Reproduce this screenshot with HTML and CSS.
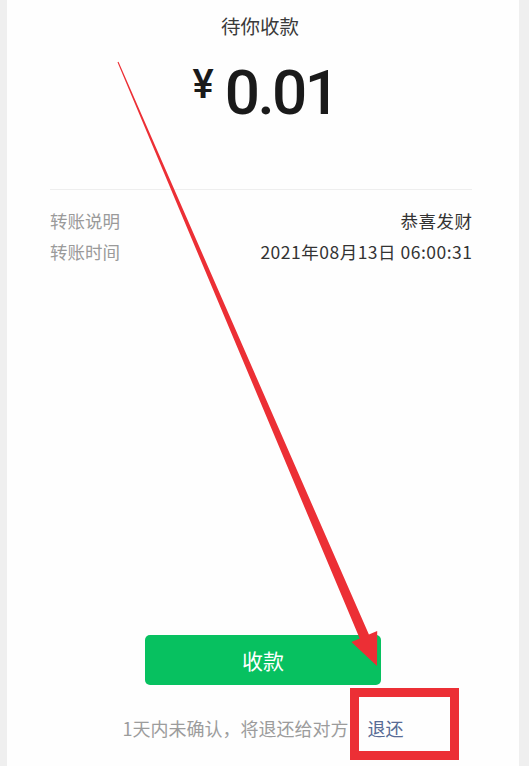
FILE: index.html
```html
<!DOCTYPE html>
<html lang="zh-CN">
<head>
<meta charset="utf-8">
<title>待你收款</title>
<link rel="stylesheet" href="styles.css">
</head>
<body>
<div class="panel">
  <h1 class="title">待你收款</h1>
  <div class="amount"><span class="yen">¥</span><span class="num">0.01</span></div>
  <div class="details">
    <div class="row"><span class="label">转账说明</span><span class="value">恭喜发财</span></div>
    <div class="row"><span class="label">转账时间</span><span class="value">2021年08月13日 06:00:31</span></div>
  </div>
  <div class="spacer"></div>
  <button class="btn">收款</button>
  <p class="note">1天内未确认，将退还给对方<a class="link">退还</a></p>
</div>
<svg class="annot" width="529" height="766" viewBox="0 0 529 766" xmlns="http://www.w3.org/2000/svg">
  <polygon points="117.5,62.2 118.5,61.8 368.9,634.6 377.2,631.1 377,666 351.4,642.1 359.7,638.6" fill="#ec2f35"/>
  <rect x="354.5" y="692.5" width="100" height="63" fill="none" stroke="#ec2f35" stroke-width="9"/>
</svg>
</body>
</html>
```

FILE: styles.css
```css
html, body {
  margin: 0;
  padding: 0;
}
body {
  background: #efefef;
  width: 529px;
  height: 766px;
  overflow: hidden;
  position: relative;
  font-family: "Noto Sans CJK SC", "Noto Sans", sans-serif;
}
.panel {
  margin: 0 10px 0 7px;
  background: #fefefe;
  height: 766px;
  display: flex;
  flex-direction: column;
  align-items: center;
  box-sizing: border-box;
  padding: 12px 0 0;
}
.title {
  margin: 0;
  font-size: 19.5px;
  font-weight: 400;
  color: #3a3a3a;
  line-height: 28px;
  margin-right: 6px;
}
.amount {
  margin-top: 22px;
  margin-left: 4px;
  display: flex;
  align-items: flex-start;
  color: #1a1a1a;
  line-height: 1;
}
.yen {
  font-family: Roboto, "Liberation Sans", sans-serif;
  font-size: 40px;
  font-weight: 500;
  margin-top: 3px;
  margin-right: 11px;
}
.num {
  font-family: Roboto, "Liberation Sans", sans-serif;
  font-size: 62px;
  font-weight: 500;
  letter-spacing: -2.5px;
}
.details {
  align-self: stretch;
  margin: 65px 47px 0 43px;
  border-top: 1px solid #eeeeee;
  padding-top: 15px;
}
.row {
  display: flex;
  justify-content: space-between;
  font-size: 17.5px;
  line-height: 31px;
}
.label {
  color: #9a9a9a;
}
.value {
  color: #333333;
  letter-spacing: 0.5px;
  margin-right: -0.5px;
}
.spacer {
  flex: 1;
}
.btn {
  width: 236px;
  height: 50px;
  border: none;
  border-radius: 5px;
  background: #07c160;
  color: #ffffff;
  font-family: "Noto Sans CJK SC", sans-serif;
  font-size: 21px;
  font-weight: 400;
}
.note {
  margin: 30px 0 25px;
  font-size: 18px;
  line-height: 26px;
  color: #9c9c9c;
}
.link {
  color: #576b95;
  margin-left: 19px;
}
.annot {
  position: absolute;
  left: 0;
  top: 0;
  pointer-events: none;
}
```
